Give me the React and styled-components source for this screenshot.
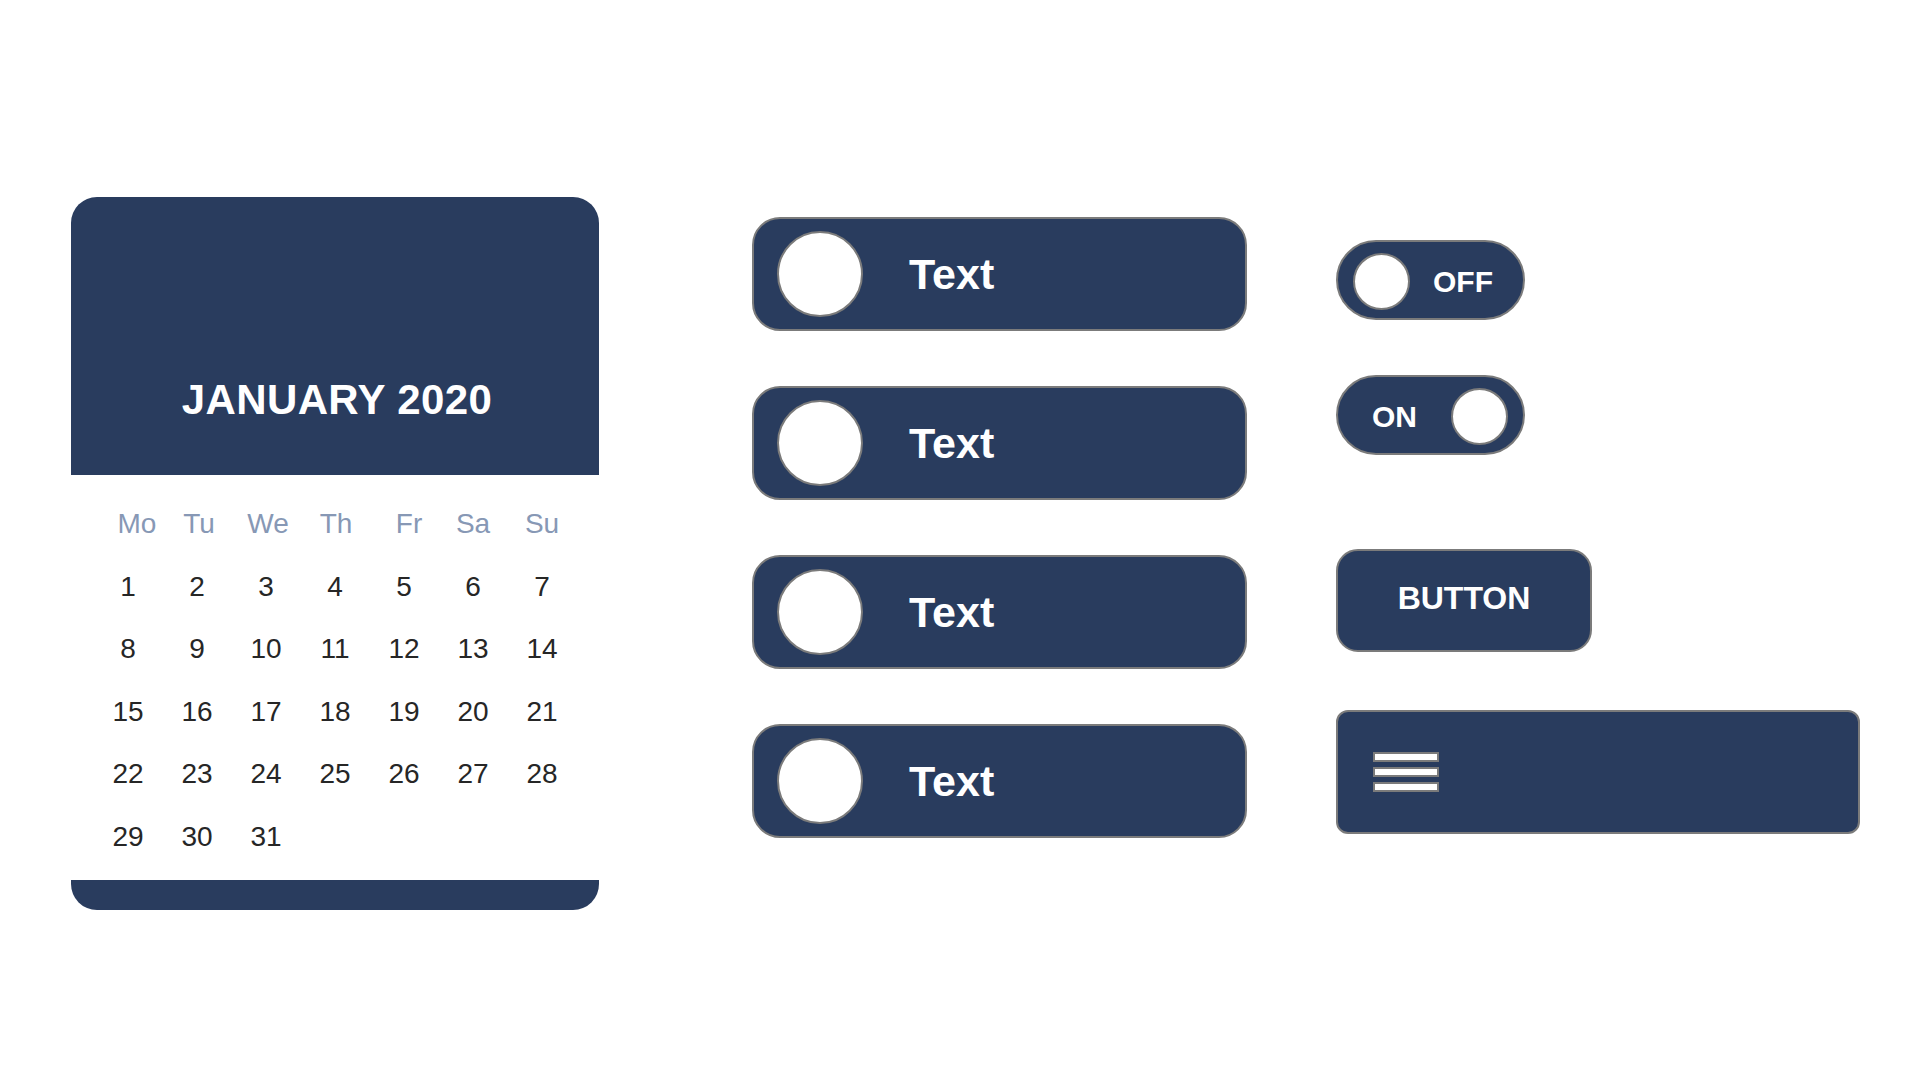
import React from 'react';
import styled, { createGlobalStyle } from 'styled-components';

const navy = '#293c5e';
const edge = '#7b7b7b';

const days = [
    { name: 'Mo', shift: 9 },
    { name: 'Tu', shift: 2 },
    { name: 'We', shift: 2 },
    { name: 'Th', shift: 1 },
    { name: 'Fr', shift: 5 },
    { name: 'Sa', shift: 0 },
    { name: 'Su', shift: 0 },
];
const dates = Array.from({ length: 31 }, (_, i) => i + 1);

function App() {
    return (
        <Page>
            <GlobalStyle />
            <Calendar>
                <CalHeader>
                    <CalTitle>JANUARY 2020</CalTitle>
                </CalHeader>
                <CalBody>
                    {days.map((d) => (
                        <DayName key={d.name} $shift={d.shift}>{d.name}</DayName>
                    ))}
                    {dates.map((n) => (
                        <DayNum key={n}>{n}</DayNum>
                    ))}
                </CalBody>
                <CalFooter />
            </Calendar>

            <PillColumn>
                {[1, 2, 3, 4].map((i) => (
                    <Pill key={i}>
                        <Knob size={86} />
                        <PillLabel>Text</PillLabel>
                    </Pill>
                ))}
            </PillColumn>

            <RightColumn>
                <Toggle $on={false}>
                    <Knob size={57} />
                    <ToggleLabel>OFF</ToggleLabel>
                </Toggle>
                <Toggle $on>
                    <ToggleLabel>ON</ToggleLabel>
                    <Knob size={57} />
                </Toggle>
                <Button>BUTTON</Button>
                <MenuBar>
                    <Burger>
                        <BurgerLine />
                        <BurgerLine />
                        <BurgerLine />
                    </Burger>
                </MenuBar>
            </RightColumn>
        </Page>
    );
}

//styles
const GlobalStyle = createGlobalStyle`
    html, body {
        margin: 0;
        padding: 0;
        background: #ffffff;
    }
    body {
        font-family: "Liberation Sans", Arial, sans-serif;
    }
`;

const Page = styled.div`
    width: 1920px;
    height: 1080px;
    display: flex;
    align-items: flex-start;
    padding: 197px 0 0 71px;
    box-sizing: border-box;
`;

const Calendar = styled.div`
    width: 528px;
    display: flex;
    flex-direction: column;
`;

const CalHeader = styled.div`
    height: 278px;
    background: ${navy};
    border-radius: 26px 26px 0 0;
    display: flex;
    align-items: flex-end;
    justify-content: center;
    padding-bottom: 54px;
    box-sizing: border-box;
`;

const CalTitle = styled.div`
    color: #ffffff;
    font-size: 42px;
    font-weight: 700;
    line-height: 42px;
    letter-spacing: 0.4px;
    margin-left: 4px;
`;

const CalBody = styled.div`
    display: grid;
    grid-template-columns: repeat(7, 69px);
    grid-auto-rows: 62.5px;
    justify-content: center;
    padding: 18px 0 12px;
    background: #ffffff;
`;

const DayName = styled.div`
    display: flex;
    align-items: center;
    justify-content: center;
    padding-left: ${(p) => p.$shift * 2}px;
    font-size: 28px;
    color: #8798b5;
`;

const DayNum = styled.div`
    display: flex;
    align-items: center;
    justify-content: center;
    font-size: 28px;
    color: #262626;
`;

const CalFooter = styled.div`
    height: 30px;
    background: ${navy};
    border-radius: 0 0 26px 26px;
`;

const PillColumn = styled.div`
    display: flex;
    flex-direction: column;
    gap: 55px;
    margin: 20px 0 0 153px;
`;

const Pill = styled.div`
    width: 495px;
    height: 114px;
    box-sizing: border-box;
    background: ${navy};
    border: 2px solid ${edge};
    border-radius: 28px;
    display: flex;
    align-items: center;
    padding-left: 23px;
`;

const Knob = styled.div`
    width: ${(p) => p.size}px;
    height: ${(p) => p.size}px;
    box-sizing: border-box;
    border-radius: 50%;
    background: #ffffff;
    border: 2px solid ${edge};
    flex-shrink: 0;
`;

const PillLabel = styled.span`
    margin-left: 46px;
    color: #ffffff;
    font-size: 43px;
    font-weight: 700;
`;

const RightColumn = styled.div`
    display: flex;
    flex-direction: column;
    align-items: flex-start;
    margin: 43px 0 0 89px;
`;

const Toggle = styled.div`
    width: 189px;
    height: 80px;
    box-sizing: border-box;
    background: ${navy};
    border: 2px solid ${edge};
    border-radius: 40px;
    display: flex;
    align-items: center;
    gap: ${(p) => (p.$on ? '34px' : '23px')};
    padding-left: ${(p) => (p.$on ? '34px' : '15px')};
    padding-top: 2px;
    margin-bottom: ${(p) => (p.$on ? '94px' : '55px')};
`;

const ToggleLabel = styled.span`
    color: #ffffff;
    font-size: 30px;
    font-weight: 700;
    margin-top: 2px;
`;

const Button = styled.div`
    width: 256px;
    height: 103px;
    box-sizing: border-box;
    background: ${navy};
    border: 2px solid ${edge};
    border-radius: 22px;
    display: flex;
    align-items: center;
    justify-content: center;
    padding-bottom: 4px;
    color: #ffffff;
    font-size: 32px;
    font-weight: 700;
    margin-bottom: 58px;
`;

const MenuBar = styled.div`
    width: 524px;
    height: 124px;
    box-sizing: border-box;
    background: ${navy};
    border: 2px solid ${edge};
    border-radius: 12px;
    display: flex;
    align-items: center;
    padding-left: 35px;
`;

const Burger = styled.div`
    display: flex;
    flex-direction: column;
    gap: 5px;
`;

const BurgerLine = styled.span`
    display: block;
    width: 66px;
    height: 10px;
    box-sizing: border-box;
    background: #ffffff;
    border: 2px solid ${edge};
`;

export default App
